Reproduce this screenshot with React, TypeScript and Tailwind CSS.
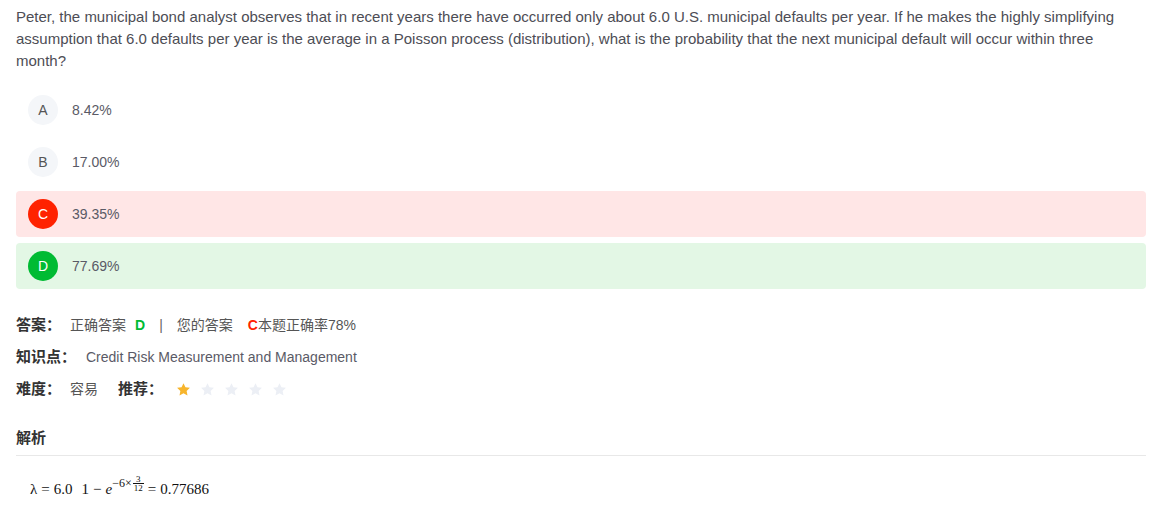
import React from "react";

const Star = ({ filled }: { filled: boolean }) => (
  <svg width="15" height="15" viewBox="0 0 24 24" className="shrink-0">
    <path
      d="M12 1.8l3.1 6.6 7.2.9-5.3 5 1.4 7.1L12 17.9l-6.4 3.5 1.4-7.1-5.3-5 7.2-.9z"
      fill={filled ? "#f7b52c" : "#eceff5"}
    />
  </svg>
);

const options = [
  { k: "A", v: "8.42%", row: "", circle: "bg-[#f4f6f9] text-[#555]" },
  { k: "B", v: "17.00%", row: "", circle: "bg-[#f4f6f9] text-[#555]" },
  { k: "C", v: "39.35%", row: "bg-[#ffe6e6]", circle: "bg-[#ff2200] text-white" },
  { k: "D", v: "77.69%", row: "bg-[#e3f7e5]", circle: "bg-[#00bb33] text-white" },
];

export default function App() {
  return (
    <div
      className="w-[1156px] h-[525px] bg-white pl-4 pr-[10px] pt-[6px] text-[#555]"
      style={{ fontFamily: '"Liberation Sans", Arial, "Noto Sans CJK SC", sans-serif' }}
    >
      <p className="pr-[6px] text-[15px] leading-[22px] text-[#4d4d55]">
        Peter, the municipal bond analyst observes that in recent years there have occurred only about 6.0 U.S. municipal defaults per year. If he makes the highly simplifying assumption that 6.0 defaults per year is the average in a Poisson process (distribution), what is the probability that the next municipal default will occur within three month?
      </p>

      <div className="mt-[15px] flex flex-col gap-[6px]">
        {options.map((o) => (
          <div key={o.k} className={`h-[46px] rounded-[4px] flex items-center pl-3 ${o.row}`}>
            <div className={`w-[30px] h-[30px] rounded-full flex items-center justify-center text-[14px] ${o.circle}`}>
              {o.k}
            </div>
            <span className="ml-[14px] text-[14px] text-[#5a5a66]">{o.v}</span>
          </div>
        ))}
      </div>

      <div className="mt-[25px] flex flex-col gap-[10px] text-[14px]">
        <div className="h-[22px] flex items-center">
          <span className="font-bold text-[15px] text-[#333] w-[54px]">答案：</span>
          <span>正确答案</span>
          <span className="ml-[9px] font-bold text-[#00bb33]">D</span>
          <span className="ml-[14px] text-[#666]">|</span>
          <span className="ml-[14px]">您的答案</span>
          <span className="ml-[15px] font-bold text-[#ff2200]">C</span>
          <span>本题正确率78%</span>
        </div>
        <div className="h-[22px] flex items-center">
          <span className="font-bold text-[15px] text-[#333] w-[70px]">知识点：</span>
          <span className="text-[#5a5a66]">Credit Risk Measurement and Management</span>
        </div>
        <div className="h-[22px] flex items-center">
          <span className="font-bold text-[15px] text-[#333] w-[54px]">难度：</span>
          <span>容易</span>
          <span className="ml-[20px] font-bold text-[15px] text-[#333] w-[58px]">推荐：</span>
          <div className="flex items-center gap-[9px]">
            <Star filled />
            <Star filled={false} />
            <Star filled={false} />
            <Star filled={false} />
            <Star filled={false} />
          </div>
        </div>
      </div>

      <div className="mt-[27px] pb-[6px] border-b border-[#e8e8e8] font-bold text-[15px] text-[#333] leading-[22px]">
        解析
      </div>

      <div
        className="mt-[22px] pl-[14px] flex items-center text-[15px] text-[#111]"
        style={{ fontFamily: '"Liberation Serif", "DejaVu Serif", serif' }}
      >
        <span>λ</span>
        <span className="ml-[4px]">=</span>
        <span className="ml-[4px]">6.0</span>
        <span className="ml-[9px]">1</span>
        <span className="ml-[4px]">−</span>
        <span className="ml-[4px] italic">e</span>
        <span className="relative -top-[6px] text-[12px] flex items-center">
          <span>−6×</span>
          <span className="inline-flex flex-col items-center leading-[8px] text-[9px] ml-[1px]">
            <span>3</span>
            <span className="border-t border-[#111] px-[1px]">12</span>
          </span>
        </span>
        <span className="ml-[4px]">=</span>
        <span className="ml-[4px]">0.77686</span>
      </div>
    </div>
  );
}
